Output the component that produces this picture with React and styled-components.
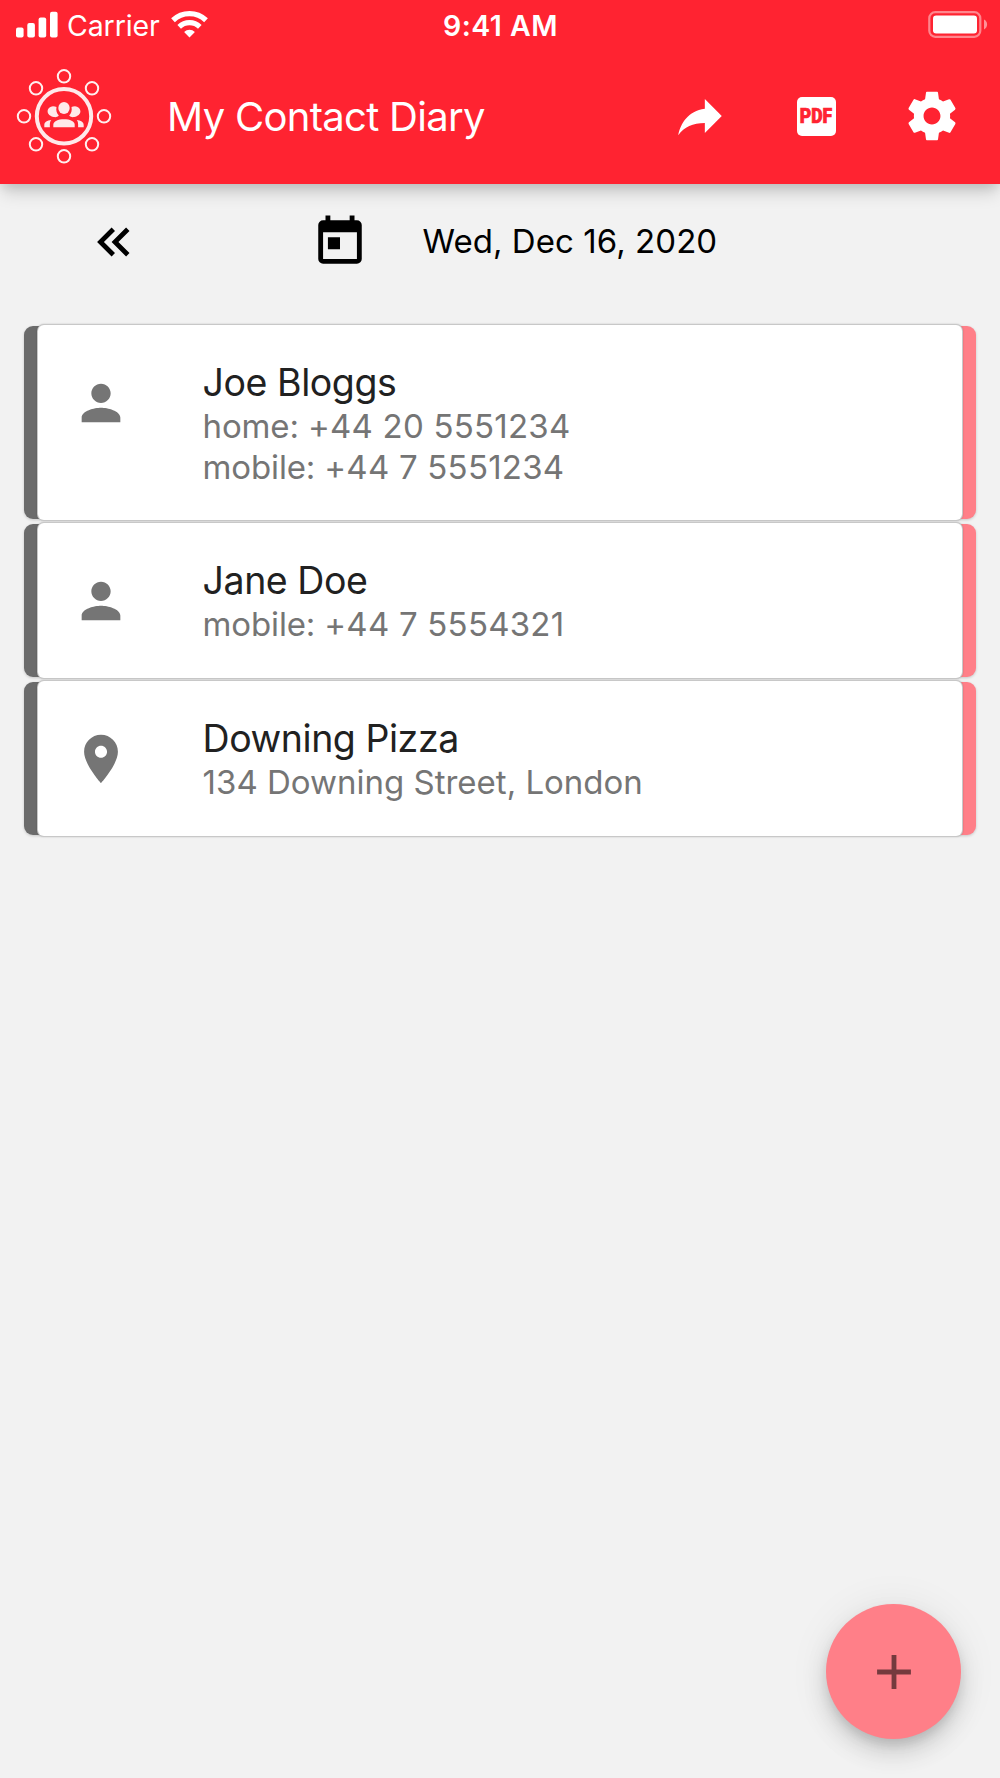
import React from "react";
import styled, { createGlobalStyle } from "styled-components";

const GlobalStyle = createGlobalStyle`
  *, *::before, *::after { box-sizing: border-box; }
  body {
    margin: 0;
    background: #f2f2f2;
    font-family: Inter, "Liberation Sans", sans-serif;
  }
`;

const Screen = styled.div`
  position: relative;
  display: flex;
  flex-direction: column;
  width: 1000px;
  height: 1778px;
  overflow: hidden;
  background: #f2f2f2;
`;

const Header = styled.header`
  height: 184px;
  flex: none;
  background: #ff2331;
  color: #fff;
  box-shadow: 0 5px 10px -2px rgba(0, 0, 0, 0.1),
    0 12px 16px -3px rgba(0, 0, 0, 0.15);
`;

const StatusBar = styled.div`
  display: grid;
  grid-template-columns: 1fr auto 1fr;
  align-items: center;
  height: 48px;
  padding: 0 12px 0 16px;
`;

const StatusLeft = styled.div`
  display: flex;
  align-items: center;
`;

const StatusText = styled.span`
  font-size: 28.5px;
  line-height: 36px;
  white-space: nowrap;
  padding-top: 3px;
`;

const Carrier = styled(StatusText)`
  margin: 0 11px 0 9px;
  letter-spacing: -0.1px;
`;

const Clock = styled(StatusText)`
  margin-right: 3px;
  font-weight: 600;
  letter-spacing: 0.5px;
`;

const StatusRight = styled.div`
  display: flex;
  justify-content: flex-end;
`;

const Toolbar = styled.div`
  display: flex;
  align-items: center;
  height: 136px;
  padding: 0 10px 0 16px;
`;

const Title = styled.h1`
  flex: 1;
  margin: 0 0 0 55px;
  padding-top: 2px;
  font-size: 40px;
  line-height: 56px;
  font-weight: 400;
  letter-spacing: -0.7px;
  white-space: nowrap;
`;

const ToolButton = styled.button`
  display: flex;
  align-items: center;
  justify-content: center;
  width: 116px;
  height: 116px;
  padding: 0;
  border: 0;
  background: none;
  color: inherit;
`;

const PdfBadge = styled.span`
  display: flex;
  align-items: center;
  justify-content: center;
  width: 39px;
  height: 39px;
  padding-top: 2px;
  border-radius: 5px;
  background: #fff;
  color: #ff2331;
  font-family: Roboto, "Liberation Sans", sans-serif;
  font-size: 19.5px;
  line-height: 20px;
  font-weight: 900;
`;

const PdfLabel = styled.span`
  transform: scaleX(0.9);
  -webkit-text-stroke: 0.7px #ff2331;
`;

const DateBar = styled.div`
  display: flex;
  align-items: center;
  height: 116px;
  padding-left: 85px;
  color: #000;
`;

const DateIcon = styled.div`
  display: flex;
  margin-left: 168px;
`;

const DateText = styled.div`
  margin-left: 53.5px;
  padding-bottom: 2px;
  font-size: 33px;
  line-height: 44px;
  letter-spacing: 0.06px;
  white-space: nowrap;
`;

const List = styled.main`
  display: flex;
  flex-direction: column;
  gap: 3px;
  padding: 25px 24px 0;
`;

const Row = styled.div`
  display: flex;
  height: ${(p) => p.$height}px;
`;

const Edge = styled.div`
  flex: none;
  width: 24px;
  margin: 1px 0;
  border-radius: 9px;
  background: ${(p) => p.$color};
  box-shadow: 0 1px 3px rgba(0, 0, 0, 0.18);
`;

const Card = styled.div`
  position: relative;
  flex: 1;
  display: flex;
  align-items: flex-start;
  margin: 0 -10px;
  padding: 35px 0 0 34px;
  border-radius: 6px;
  background: #fff;
  box-shadow: 0 0 0 1px #c8c8c8, 0 0 2px 1px rgba(0, 0, 0, 0.2);
`;

const RowIcon = styled.div`
  display: flex;
  margin-top: 14px;
  color: #757575;
`;

const Details = styled.div`
  margin-left: 72.6px;
`;

const Name = styled.div`
  font-size: 37.5px;
  line-height: 46px;
  color: #212121;
  letter-spacing: -0.45px;
  white-space: nowrap;
`;

const Line = styled.div`
  font-size: 33px;
  line-height: 41px;
  color: #757575;
  white-space: pre;
`;

const PhoneLabel = styled.span`
  letter-spacing: -0.15px;
`;

const PhoneNumber = styled.span`
  letter-spacing: 0.22px;
`;

const Fab = styled.button`
  position: absolute;
  left: 826px;
  top: 1604px;
  display: flex;
  align-items: center;
  justify-content: center;
  width: 135px;
  height: 135px;
  padding: 0;
  border: 0;
  border-radius: 50%;
  background: #ff7f88;
  color: rgba(0, 0, 0, 0.54);
  box-shadow: 0 7px 12px -2px rgba(0, 0, 0, 0.13),
    0 14px 24px rgba(0, 0, 0, 0.13), 0 2px 43px rgba(0, 0, 0, 0.07);
`;

const PATHS = {
  share: "M14 9V5l7 7-7 7v-4.1c-5 0-8.5 1.6-11 5.1 1-5 4-10 11-11z",
  settings:
    "M19.43 12.98c.04-.32.07-.64.07-.98s-.03-.66-.07-.98l2.11-1.65c.19-.15.24-.42.12-.64l-2-3.46c-.12-.22-.39-.3-.61-.22l-2.49 1c-.52-.4-1.08-.73-1.69-.98l-.38-2.65C14.46 2.18 14.25 2 14 2h-4c-.25 0-.46.18-.49.42l-.38 2.65c-.61.25-1.17.59-1.69.98l-2.49-1c-.23-.09-.49 0-.61.22l-2 3.46c-.13.22-.07.49.12.64l2.11 1.65c-.04.32-.07.65-.07.98s.03.66.07.98l-2.11 1.65c-.19.15-.24.42-.12.64l2 3.46c.12.22.39.3.61.22l2.49-1c.52.4 1.08.73 1.69.98l.38 2.65c.03.24.24.42.49.42h4c.25 0 .46-.18.49-.42l.38-2.65c.61-.25 1.17-.59 1.69-.98l2.49 1c.23.09.49 0 .61-.22l2-3.46c.12-.22.07-.49-.12-.64l-2.11-1.65zM12 15.5c-1.93 0-3.5-1.57-3.5-3.5s1.57-3.5 3.5-3.5 3.5 1.57 3.5 3.5-1.57 3.5-3.5 3.5z",
  previous:
    "M18.41 7.41L17 6l-6 6 6 6 1.41-1.41L13.83 12zM12.41 7.41L11 6l-6 6 6 6 1.41-1.41L7.83 12z",
  calendar:
    "M7 10h5v5H7zM19 19H5V8h14zM19 3h-1V1h-2v2H8V1H6v2H5a2 2 0 0 0-2 2v14a2 2 0 0 0 2 2h14a2 2 0 0 0 2-2V5a2 2 0 0 0-2-2z",
  person:
    "M12 12c2.21 0 4-1.79 4-4s-1.79-4-4-4-4 1.79-4 4 1.79 4 4 4zm0 2c-2.67 0-8 1.34-8 4v2h16v-2c0-2.66-5.33-4-8-4z",
  place:
    "M12 2C8.13 2 5 5.13 5 9c0 5.25 7 13 7 13s7-7.75 7-13c0-3.87-3.13-7-7-7zm0 9.5c-1.38 0-2.5-1.12-2.5-2.5s1.12-2.5 2.5-2.5 2.5 1.12 2.5 2.5-1.12 2.5-2.5 2.5z",
  add: "M19 13h-6v6h-2v-6H5v-2h6V5h2v6h6v2z",
};

function Icon({ name }) {
  return (
    <svg width="58" height="58" viewBox="0 0 24 24" fill="currentColor" fillRule="evenodd">
      <path d={PATHS[name]} />
    </svg>
  );
}

function Signal() {
  return (
    <svg width="42" height="27" viewBox="0 0 42 27" fill="#fff">
      <rect x="0" y="16.5" width="7.6" height="10" rx="2" />
      <rect x="11.3" y="12" width="7.6" height="14.5" rx="2" />
      <rect x="22.6" y="6.4" width="7.6" height="20.1" rx="2" />
      <rect x="34" y="0.7" width="7.6" height="25.8" rx="2" />
    </svg>
  );
}

function Wifi() {
  return (
    <svg width="37" height="28" viewBox="0 0 37 28" fill="none" stroke="#fff">
      <path d="M2 10.2a24 24 0 0 1 33 0" strokeWidth="5.4" />
      <path d="M8.2 16.8a15 15 0 0 1 20.6 0" strokeWidth="5.2" />
      <path d="M13.1 21.9a8 8 0 0 1 10.8 0L18.5 27.4z" fill="#fff" stroke="none" />
    </svg>
  );
}

function Battery() {
  return (
    <svg width="60" height="27" viewBox="0 0 60 27">
      <rect x="1.3" y="1.2" width="51" height="24.6" rx="6" fill="none" stroke="#fff" strokeOpacity=".45" strokeWidth="2.2" />
      <rect x="5" y="4.5" width="44" height="18" rx="3.2" fill="#fff" />
      <path d="M56 8.6c1.9.8 3.1 2.6 3.1 4.9s-1.2 4.1-3.1 4.9z" fill="#fff" fillOpacity=".5" />
    </svg>
  );
}

const SATELLITES = [
  [48, 8], [76, 20], [88, 48], [76, 76], [48, 88], [20, 76], [8, 48], [20, 20],
];

function Logo() {
  return (
    <svg width="96" height="96" viewBox="0 0 96 96" fill="#ffe9ea">
      <circle cx="48" cy="48.3" r="27.2" fill="none" stroke="#ffe9ea" strokeWidth="4" />
      {SATELLITES.map(([x, y]) => (
        <circle key={`${x}-${y}`} cx={x} cy={y + 0.3} r="6.2" fill="none" stroke="#fff0f0" strokeWidth="2" />
      ))}
      <ellipse cx="48" cy="40" rx="5.7" ry="6" />
      <path d="M37 38.2c1.4 0 2.6.3 3.5.9-.7 3.2.2 6.4 2.3 8.5-1.2 1.4-3.2 1.8-5 1.4-3.7-.6-6.3-3-6.2-5.7.1-2.9 2.500-4.900 5.400-5.100z" />
      <path d="M59 38.2c-1.4 0-2.6.3-3.5.9.7 3.2-.2 6.4-2.3 8.5 1.2 1.4 3.2 1.8 5 1.4 3.7-.6 6.3-3 6.2-5.7-.1-2.900-2.500-4.900-5.400-5.100z" />
      <path d="M37.3 59.2v-2.5c0-3.5 4.8-5.5 10.7-5.5s10.7 2 10.7 5.5v2.5z" />
      <path d="M28.3 59.2v-2c0-3.1 3-5 6.9-5.2-1.2 1.6-1.5 3.5-1.3 7.2zM67.7 59.2v-2c0-3.1-3-5-6.9-5.2 1.2 1.6 1.5 3.5 1.3 7.2z" />
    </svg>
  );
}

const ENTRIES = [
  {
    icon: "person",
    height: 195,
    name: "Joe Bloggs",
    phones: [
      { label: "home", number: "+44 20 5551234" },
      { label: "mobile", number: "+44 7 5551234" },
    ],
  },
  {
    icon: "person",
    height: 155,
    name: "Jane Doe",
    phones: [{ label: "mobile", number: "+44 7 5554321" }],
  },
  { icon: "place", height: 155, name: "Downing Pizza", address: "134 Downing Street, London" },
];

function Entry({ entry }) {
  return (
    <Row $height={entry.height}>
      <Edge $color="#6b6b6b" />
      <Card>
        <RowIcon>
          <Icon name={entry.icon} />
        </RowIcon>
        <Details>
          <Name>{entry.name}</Name>
          {entry.phones?.map(({ label, number }) => (
            <Line key={label}>
              <PhoneLabel>{`${label}: `}</PhoneLabel>
              <PhoneNumber>{number}</PhoneNumber>
            </Line>
          ))}
          {entry.address && <Line>{entry.address}</Line>}
        </Details>
      </Card>
      <Edge $color="#ff7f88" />
    </Row>
  );
}

export default function App() {
  return (
    <Screen>
      <GlobalStyle />
      <Header>
        <StatusBar>
          <StatusLeft>
            <Signal />
            <Carrier>Carrier</Carrier>
            <Wifi />
          </StatusLeft>
          <Clock>9:41 AM</Clock>
          <StatusRight>
            <Battery />
          </StatusRight>
        </StatusBar>
        <Toolbar>
          <Logo />
          <Title>My Contact Diary</Title>
          <ToolButton aria-label="Share">
            <Icon name="share" />
          </ToolButton>
          <ToolButton>
            <PdfBadge>
              <PdfLabel>PDF</PdfLabel>
            </PdfBadge>
          </ToolButton>
          <ToolButton aria-label="Settings">
            <Icon name="settings" />
          </ToolButton>
        </Toolbar>
      </Header>
      <DateBar>
        <Icon name="previous" />
        <DateIcon>
          <Icon name="calendar" />
        </DateIcon>
        <DateText>Wed, Dec 16, 2020</DateText>
      </DateBar>
      <List>
        {ENTRIES.map((entry) => (
          <Entry key={entry.name} entry={entry} />
        ))}
      </List>
      <Fab aria-label="Add entry">
        <Icon name="add" />
      </Fab>
    </Screen>
  );
}
